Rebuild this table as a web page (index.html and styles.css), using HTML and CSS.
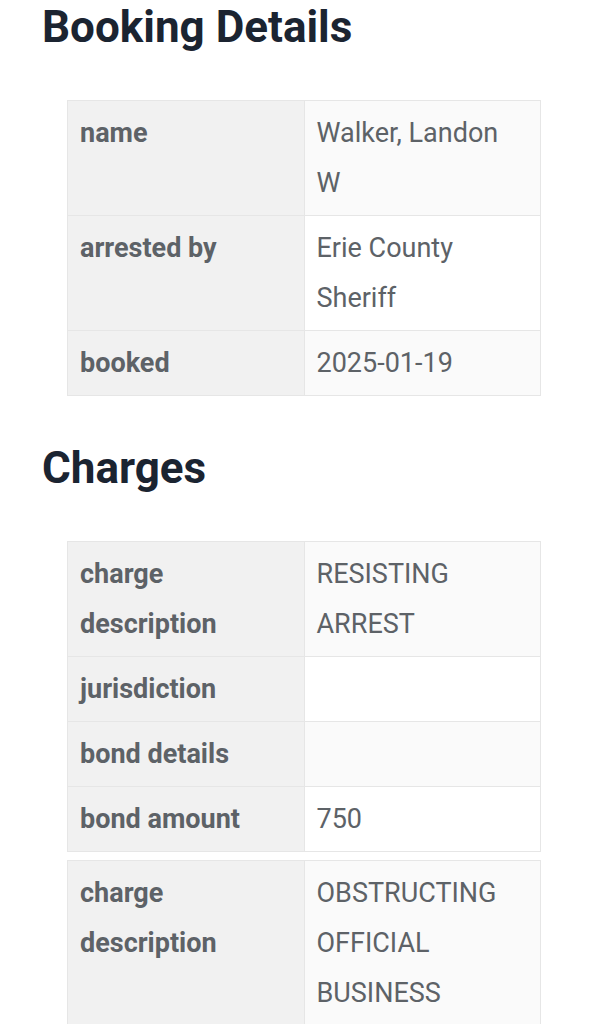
FILE: index.html
```html
<!DOCTYPE html>
<html lang="en">
<head>
<meta charset="utf-8">
<title>Booking Details</title>
<link rel="stylesheet" href="styles.css">
</head>
<body>
<main class="page">
  <section class="section">
    <h1 class="section-title">Booking Details</h1>
    <table class="info-table">
      <tr><th>name</th><td>Walker, Landon W</td></tr>
      <tr><th>arrested by</th><td>Erie County Sheriff</td></tr>
      <tr><th>booked</th><td>2025-01-19</td></tr>
    </table>
  </section>
  <section class="section">
    <h1 class="section-title">Charges</h1>
    <div class="charges">
      <table class="info-table">
        <tr><th>charge description</th><td>RESISTING ARREST</td></tr>
        <tr><th>jurisdiction</th><td></td></tr>
        <tr><th>bond details</th><td></td></tr>
        <tr><th>bond amount</th><td>750</td></tr>
      </table>
      <table class="info-table">
        <tr><th>charge description</th><td>OBSTRUCTING OFFICIAL BUSINESS</td></tr>
        <tr><th>jurisdiction</th><td></td></tr>
      </table>
    </div>
  </section>
</main>
</body>
</html>
```

FILE: styles.css
```css
html, body {
  margin: 0;
  padding: 0;
  background: #ffffff;
}
body {
  font-family: Roboto, "Liberation Sans", Arial, sans-serif;
}
.page {
  padding: 1px 42px 0;
  display: flex;
  flex-direction: column;
  gap: 46px;
}
.section {
  display: flex;
  flex-direction: column;
}
.section-title {
  margin: 0 0 47px;
  font-size: 44px;
  line-height: 52px;
  font-weight: 700;
  color: #1b2431;
}
.charges {
  display: flex;
  flex-direction: column;
  gap: 8px;
}
.info-table {
  width: 474px;
  margin-left: 25px;
  border-collapse: collapse;
  table-layout: fixed;
  font-size: 27px;
  line-height: 50px;
  color: #5d6267;
}
.info-table th,
.info-table td {
  border: 1px solid #e6e6e6;
  padding: 7px 12px;
  text-align: left;
  vertical-align: top;
  width: 50%;
}
.info-table th {
  background: #f1f1f1;
  font-weight: 700;
}
.info-table td {
  background: #fafafa;
  font-weight: 400;
}
.info-table tr:nth-child(even) td {
  background: #ffffff;
}
```
